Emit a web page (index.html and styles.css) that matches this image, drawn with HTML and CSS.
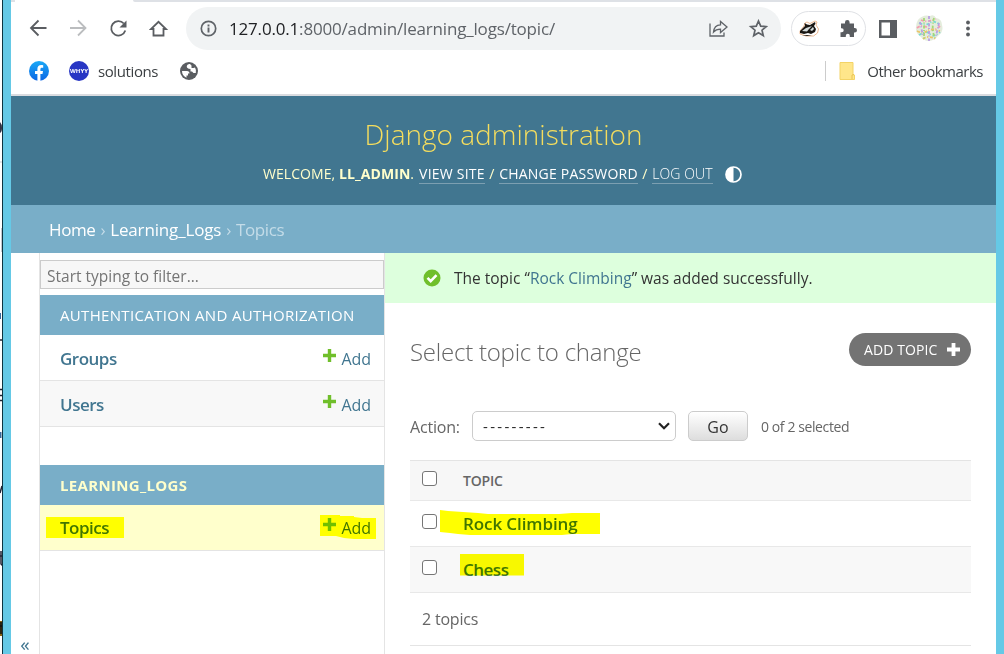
FILE: index.html
```html
<!DOCTYPE html>
<html lang="en">
<head>
<meta charset="utf-8">
<title>Select topic to change | Django site admin</title>
<link rel="stylesheet" href="styles.css">
</head>
<body>
<div class="desktop">
  <svg class="behind" width="3" height="654" viewBox="0 0 3 654">
    <rect width="3" height="654" fill="#fff"/>
    <path d="M0 122q2 2 2 6t-2 5z" fill="#334"/>
    <path d="M0 162h2M1.500 228v24" stroke="#c5c9d0"/>
    <path d="M0 313h1v6h-1zM0 432h1.500v6h-1.500z" fill="#3a6a9a"/>
    <path d="M0 340h2M0 389.500h2M0 395.500h2M0 400.500h2" stroke="#223" stroke-width="1.500"/>
    <path d="M0 493l2-7M1 551v13l2 2M0 556h2" stroke="#223" stroke-width="1.500" fill="none"/>
    <path d="M0 621h3v15h-3z" fill="#8a6410"/>
    <path d="M0 626h2M1 622v12" stroke="#111" stroke-width="1.500"/>
    <path d="M2.500 0v654" stroke="#0d3440"/>
  </svg>
  <div class="window">
    <div class="tabstrip"><span class="tab-left"></span><span class="tab-right"></span></div>
    <div class="toolbar">
      <div class="nav-buttons">
        <svg width="20" height="20" viewBox="0 0 20 20" fill="none" stroke="#5a5d61" stroke-width="1.800"><path d="M17.500 9H2.500M9.500 1.500L2 9l7.500 7.500"/></svg>
        <svg width="20" height="20" viewBox="0 0 20 20" fill="none" stroke="#bbbdbf" stroke-width="1.800"><path d="M1 9h15M9 1.500L16.500 9 9 16.500"/></svg>
        <svg width="20" height="20" viewBox="0 0 20 20" fill="none" stroke="#5a5d61" stroke-width="1.800"><path d="M14.800 4.500A7.200 7.200 0 1 0 16.300 11.500"/><path d="M17.500 1.500v7h-7z" fill="#5a5d61" stroke="none"/></svg>
        <svg width="20" height="20" viewBox="0 0 20 20" fill="none" stroke="#5a5d61" stroke-width="1.800"><path d="M2 10h2.500v6.500h10V10H17L9.500 2.800z"/></svg>
      </div>
      <div class="address">
        <svg width="18" height="18" viewBox="0 0 18 18" fill="none" stroke="#5f6368" stroke-width="1.700"><circle cx="8.500" cy="8.500" r="7.200"/><path d="M8.500 7.500v5M8.500 4.500v1.900" stroke-width="1.900"/></svg>
        <span class="url"><span class="host">127.0.0.1</span>:8000/admin/learning_logs/topic/</span>
        <svg class="share" width="20" height="20" viewBox="0 0 20 20" fill="none" stroke="#5f6368" stroke-width="1.300"><path d="M2 4.500V17h14v-3.500M5.500 13c.4-4.500 2.500-7 7-7.200V2.500L19 8l-6.500 5.500v-3.300c-3.400 0-5.300.8-7 2.800z"/></svg>
        <svg width="20" height="20" viewBox="0 0 20 20" fill="none" stroke="#5f6368" stroke-width="1.700"><path d="M10.500 2l2.200 5.100 5.500.5-4.200 3.600 1.300 5.400-4.800-2.900-4.800 2.900L7 11.200 2.800 7.600l5.500-.5z"/></svg>
      </div>
      <div class="extensions">
        <svg width="20" height="18" viewBox="0 0 20 18"><path d="M1 11L5 6 6 3 8 2l3 1.500L16 1l2 1-1 3 2.500 4-1 4-4 3H7l-6-2z" fill="#fff" stroke="#e8a878" stroke-width=".8"/><path d="M1 11l4-4 1-1-.500-3L8 4.500 11 5l5-3 .500 1.500L15 6l2 3-1 3-4 2-3-1-4 1-4-1z" fill="#181512"/><path d="M3 11l4-3 6-2-3 3-2 2.500zM11 10l3-3 1 2-2 2z" fill="#d3dada"/><path d="M3 15l5 1 5-1" fill="#25211d"/></svg>
        <svg width="20" height="20" viewBox="0 0 20 20"><path d="M3 4.500h4V3.300a2.300 2.300 0 0 1 4.600 0v1.200H16V9h.8a2.200 2.200 0 0 1 0 4.400H16V18h-4.200v-1.200a2 2 0 0 0-4 0V18H2.500v-4.800h1.200a2 2 0 0 0 0-4H3z" fill="#5a5d61"/></svg>
      </div>
      <svg class="panel-icon" width="18" height="18" viewBox="0 0 18 18"><path d="M0 0h18v18H0zM2.500 2.500v13h8.500v-13z" fill="#5a5d61" fill-rule="evenodd"/></svg>
      <svg class="avatar" width="28" height="28" viewBox="0 0 28 28"><path d="M3 5q5-6 12-4 4-2 6 2 6 1 6 7 2 7-4 11-4 5-10 5-5-1-7-4-6-4-5-10 0-4 2-7z" fill="#e4ecdc"/><g fill="none" stroke-width="1.800" stroke-dasharray="3 1.500 1 2"><path d="M6 5q6 3 15-1M2 13q5-4 11 0t12-2" stroke="#f59caf"/><path d="M4 8q8 3 11 0t9 1M4 20q8-5 11-1t10-2" stroke="#77d9d2"/><path d="M2 16q6 3 10 0t13 0M8 24q5-4 13 0" stroke="#eac568"/><path d="M9 3v21M19 3q-3 12 1 20" stroke="#a4d977"/><path d="M14 1v25M5 7l3 14M24 8l-3 13" stroke="#ba9ee4"/></g></svg>
      <svg class="menu-icon" width="6" height="18" viewBox="0 0 6 18" fill="#5a5d61"><circle cx="3" cy="2.500" r="1.900"/><circle cx="3" cy="8.500" r="1.900"/><circle cx="3" cy="14.500" r="1.900"/></svg>
    </div>
    <div class="bookmarks">
      <svg width="20" height="20" viewBox="0 0 20 20"><defs><linearGradient id="fb" x2="0" y2="1"><stop stop-color="#1aa9f6"/><stop offset="1" stop-color="#0b65e4"/></linearGradient></defs><circle cx="10" cy="10" r="10" fill="url(#fb)"/><path d="M8.400 20v-7H6v-3h2.400V8c0-2.600 1.500-4 3.800-4 .8 0 1.700.1 2 .2v2.600h-1.300c-1.200 0-1.500.7-1.500 1.500V10H14l-.5 3h-2.100v7z" fill="#fff"/></svg>
      <span class="whyy">WHYY</span>
      <span class="bookmark-label">solutions</span>
      <svg width="18" height="18" viewBox="0 0 18 18"><circle cx="9" cy="9" r="9" fill="#5a5d61"/><path d="M2 9h5q2.500 0 2.500 2.500H8v2H6.500v2.200C3.500 14.500 2 12 2 9zM10 2C7 2 6 4.500 7.500 6q1 1 3 1v2.500H12l1.500 1.500h2.300Q16.500 8 15 5.500L13.500 6h-2V3.500z" fill="#fff"/></svg>
      <span class="divider"></span>
      <svg width="16" height="18" viewBox="0 0 16 18"><path d="M1 .5h13v12l1.500.5v4.500H1z" fill="#ffe68a" stroke="#f3d366"/><path d="M13 17v-4l2-.5" fill="none" stroke="#e9c452"/></svg>
      <span class="bookmark-label other">Other bookmarks</span>
    </div>
    <header class="site-header">
      <h1>Django administration</h1>
      <div class="user-tools">
        <span class="welcome">WELCOME, <b>LL_ADMIN</b>.</span>
        <a class="view">VIEW SITE</a><span class="slash">/</span><a class="change">CHANGE PASSWORD</a><span class="slash">/</span><a class="logout">LOG OUT</a>
        <svg width="17" height="17" viewBox="0 0 17 17"><circle cx="8.500" cy="8.500" r="7.500" fill="none" stroke="#fff" stroke-width="1.700"/><path d="M8.500 1a7.500 7.500 0 0 0 0 15z" fill="#fff"/></svg>
      </div>
    </header>
    <nav class="breadcrumbs"><a>Home</a><i>›</i><a class="app">Learning_Logs</a><i>›</i><span class="here">Topics</span></nav>
    <div class="main">
      <div class="toggle">«</div>
      <aside class="sidebar">
        <div class="filter">Start typing to filter…</div>
        <section class="module">
          <h2 class="auth">AUTHENTICATION AND AUTHORIZATION</h2>
          <div class="row"><a class="model">Groups</a><svg class="plus" width="13" height="13" viewBox="0 0 13 13"><path d="M4.800 0h3.400v4.800H13v3.400H8.200V13H4.800V8.200H0V4.800h4.800z" fill="#70bf2b"/></svg><a class="add">Add</a></div>
          <div class="row alt"><a class="model">Users</a><svg class="plus" width="13" height="13" viewBox="0 0 13 13"><path d="M4.800 0h3.400v4.800H13v3.400H8.200V13H4.800V8.200H0V4.800h4.800z" fill="#70bf2b"/></svg><a class="add">Add</a></div>
        </section>
        <section class="module">
          <h2 class="logs">LEARNING_LOGS</h2>
          <div class="row current"><a class="model">Topics</a><svg class="plus" width="13" height="13" viewBox="0 0 13 13"><path d="M4.800 0h3.400v4.800H13v3.400H8.200V13H4.800V8.200H0V4.800h4.800z" fill="#70bf2b"/></svg><a class="add">Add</a>
            <svg class="marker" width="344" height="45" viewBox="0 0 344 45" fill="#ff0"><path d="M6 12h78v21H6zM280 10h20v1h14v1l8 1h14v21h-22l-10-1-8-2h-16z"/></svg>
          </div>
        </section>
      </aside>
      <main class="content">
        <div class="message">
          <svg width="18" height="18" viewBox="0 0 18 18"><circle cx="9" cy="9" r="8.500" fill="#70bf2b"/><path d="M4.500 8.800l3.200 3.300 5.800-6" fill="none" stroke="#fff" stroke-width="2.600"/></svg>
          <span class="msg-text">The topic “<a>Rock Climbing</a>” was added successfully.</span>
        </div>
        <div class="title-row">
          <h2>Select topic to change</h2>
          <a class="add-topic"><span>ADD TOPIC</span><svg width="13" height="13" viewBox="0 0 13 13"><path d="M4.600 0h3.800v4.600H13v3.800H8.400V13H4.600V8.400H0V4.600h4.600z" fill="#fff"/></svg></a>
        </div>
        <div class="actions">
          <span class="action-label">Action:</span>
          <div class="select"><span class="dashes">---------</span><svg width="12" height="8" viewBox="0 0 12 8"><path d="M1 1.200l5 5 5-5" fill="none" stroke="#222" stroke-width="2.200"/></svg></div>
          <div class="go">Go</div>
          <span class="counter">0 of 2 selected</span>
        </div>
        <div class="results">
          <div class="result head"><span class="check"></span><span>TOPIC</span></div>
          <div class="result"><span class="check"></span><a class="rock">Rock Climbing</a>
            <svg class="marker" width="220" height="45" viewBox="0 0 220 45" fill="#ff0"><path d="M30 9l8 1 30 2 10 1h71l13-1h28v21h-28l-10 1H60l-12-1-8-1-10-1z"/></svg></div>
          <div class="result alt"><span class="check"></span><a class="chess">Chess</a>
            <svg class="marker" width="220" height="45" viewBox="0 0 220 45" fill="#ff0"><path d="M50 7h64v21.500H50z"/></svg></div>
        </div>
        <div class="paginator">2 topics</div>
      </main>
    </div>
  </div>
</div>
</body>
</html>
```
FILE: styles.css
```css
* { box-sizing: border-box; }
body { margin: 0; overflow: hidden; font-family: "Open Sans", "Noto Sans", sans-serif; color: #666; background: #65c9e6; }
svg { display: block; flex: none; }
h1, h2 { margin: 0; font-weight: 300; }
.desktop { display: flex; width: 1004px; height: 654px; overflow: hidden; white-space: nowrap; }
.behind { margin-right: 8px; }
.window { width: 985px; background: #fff; }

.tabstrip { display: flex; justify-content: space-between; height: 2px; }
.tab-left { width: 4px; background: #dee1e6; }
.tab-right { width: 863px; background: #dee1e6; border-bottom-left-radius: 3px; }
.toolbar { display: flex; align-items: center; height: 53px; padding-left: 18px; }
.nav-buttons { display: flex; gap: 20px; width: 157px; }
.address { display: flex; align-items: center; width: 595px; height: 43px; padding: 0 13px 0 14px; border-radius: 22px; background: #f1f3f4; }
.url { margin-left: 11px; font-size: 17px; letter-spacing: -0.18px; color: #5f6368; }
.host { color: #202124; }
.share { margin-left: auto; margin-right: 20px; }
.extensions { display: flex; align-items: center; gap: 19px; width: 75px; height: 35px; margin-left: 10px; padding-left: 7px; border: 1px solid #dfe1e5; border-radius: 18px; }
.panel-icon { margin-left: 13px; }
.avatar { margin-left: 18px; }
.menu-icon { margin-left: 22px; }
.bookmarks { display: flex; align-items: center; height: 41px; padding: 0 13px 7px 18px; border-bottom: 2px solid #dadce0; font-size: 15px; color: #3c4043; }
.whyy { width: 20px; height: 20px; margin: 0 9px 0 20px; border-radius: 50%; background: #2836c4; color: #fff; font: bold 6px/20px "Open Sans", sans-serif; text-align: center; }
.bookmark-label { letter-spacing: -0.4px; }
.bookmark-label + svg { margin-left: 22px; }
.divider { width: 1px; height: 20px; margin-left: auto; margin-right: 13px; background: #ccc; }
.divider + svg { margin-right: 12px; }
.other { letter-spacing: -0.5px; }

.site-header { height: 109px; padding-top: 18px; background: #417690; color: #ffc; }
.site-header h1 { height: 41px; line-height: 40px; text-align: center; font-size: 28px; color: #f5dd5d; }
.user-tools { display: flex; align-items: center; height: 38px; padding-left: 252px; font-size: 14px; line-height: 18px; letter-spacing: 0.22px; }
.user-tools a { border-bottom: 1px solid #7c9fb1; color: #fff; }
.user-tools .logout { font-weight: 300; letter-spacing: 0.1px; }
.welcome { margin-right: 5px; letter-spacing: 0.07px; }
.slash { margin: 0 4.500px; }
.user-tools svg { margin-left: 12px; }
.breadcrumbs { display: flex; height: 48px; padding-left: 38px; line-height: 49px; background: #79aec8; font-size: 17px; color: #c4dce8; letter-spacing: -0.4px; }
.breadcrumbs a { color: #fff; }
.breadcrumbs .app { letter-spacing: -0.15px; }
.breadcrumbs i { margin: 0 5px; font-style: normal; }

.main { display: flex; height: 401px; }
.toggle { width: 28px; padding-top: 382px; text-align: center; font-size: 19px; line-height: 19px; color: #417690; }
.sidebar { width: 346px; padding-top: 7px; border-left: 1px solid #e4e4e4; border-right: 1px solid #e4e4e4; }
.filter { height: 29px; margin-bottom: 6px; padding-left: 6px; border: 1px solid #ccc; background: #f7f7f7; font-size: 15.500px; line-height: 31px; color: #757575; }
.module { margin-bottom: 38px; }
.module h2 { height: 40px; padding-left: 20px; background: #79aec8; font-size: 15px; line-height: 41px; font-weight: 400; color: #fff; letter-spacing: 0.33px; }
.module .logs { font-weight: 700; color: #ffc; }
.row { position: relative; display: flex; align-items: center; height: 46px; padding: 2px 13px 0 20px; border-bottom: 1px solid #e4e4e4; font-size: 16px; color: #417690; }
.alt { background: #f8f8f8; }
.current { padding-top: 0; background: #ffc; }
.add { letter-spacing: -0.1px; }
.model { margin-right: auto; font-size: 17px; font-weight: 600; letter-spacing: -0.5px; }
.plus { margin: -6px 6px 0 0; }
.marker { position: absolute; left: 0; top: 0; mix-blend-mode: multiply; }

.content { flex: 1; }
.message { display: flex; align-items: center; height: 50px; padding-left: 38px; background: #dfd; color: #333; font-size: 15.500px; }
.msg-text { margin-left: 13px; }
.msg-text a { color: #417690; }
.title-row { display: flex; justify-content: space-between; height: 108px; padding: 30px 25px 0; }
.title-row h2 { font-size: 24px; line-height: 38px; letter-spacing: -0.23px; }
.add-topic { display: flex; align-items: center; gap: 10px; width: 122px; height: 33px; padding-left: 15px; border-radius: 17px; background: #737373; color: #fff; font-size: 14px; letter-spacing: 0.1px; }
.actions { display: flex; height: 30px; padding-left: 25px; font-size: 16px; line-height: 32px; }
.action-label { width: 62px; letter-spacing: -0.2px; }
.select { display: flex; align-items: center; justify-content: space-between; width: 204px; padding: 0 5px 0 10px; border: 1px solid #ccc; border-radius: 5px; color: #222; font-size: 15px; }
.dashes { letter-spacing: 2.3px; }
.go { width: 60px; margin: 0 13px 0 12px; border: 1px solid #ccc; border-radius: 5px; background: linear-gradient(#fff, #ddd); color: #333; text-align: center; line-height: 31px; }
.counter { font-size: 14px; letter-spacing: -0.4px; }
.results { width: 561px; margin: 19px 0 0 25px; border-top: 1px solid #e4e4e4; }
.result { position: relative; display: flex; height: 46px; padding: 13px 0 0 12px; border-bottom: 1px solid #e8e8e8; font-size: 17px; line-height: 19px; font-weight: 600; color: #417690; letter-spacing: -0.1px; }
.head { height: 40px; padding-top: 10px; background: #f7f7f7; color: #666; font-size: 14px; letter-spacing: -0.2px; }
.chess { letter-spacing: -0.5px; }
.check { width: 15px; height: 15px; margin-right: 26px; border: 1px solid #767676; border-radius: 3px; background: #fff; }
.paginator { width: 561px; height: 53px; margin-left: 25px; padding-left: 12px; border-bottom: 1px solid #e4e4e4; font-size: 16px; line-height: 53px; letter-spacing: -0.2px; }
```
